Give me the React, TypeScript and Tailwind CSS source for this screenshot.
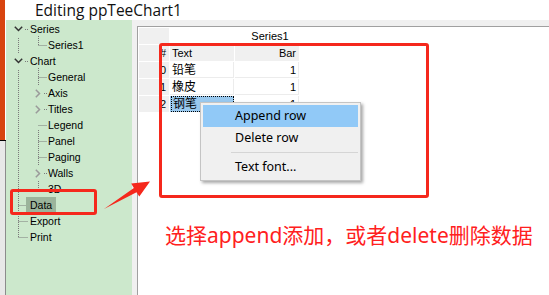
import React from 'react'

type Node = { label: string; level: 0 | 1; exp?: 'down' | 'right'; selected?: boolean }

const tree: Node[] = [
  { label: 'Series', level: 0, exp: 'down' },
  { label: 'Series1', level: 1 },
  { label: 'Chart', level: 0, exp: 'down' },
  { label: 'General', level: 1 },
  { label: 'Axis', level: 1, exp: 'right' },
  { label: 'Titles', level: 1, exp: 'right' },
  { label: 'Legend', level: 1 },
  { label: 'Panel', level: 1 },
  { label: 'Paging', level: 1 },
  { label: 'Walls', level: 1, exp: 'right' },
  { label: '3D', level: 1 },
  { label: 'Data', level: 0, selected: true },
  { label: 'Export', level: 0 },
  { label: 'Print', level: 0 },
]

const rows = [
  { n: '0', text: '铅笔', v: '1' },
  { n: '1', text: '橡皮', v: '1' },
  { n: '2', text: '钢笔', v: '1', selected: true },
]

// dotted connector lines of the tree view, panel coordinates
function TreeLines() {
  const y = (i: number) => 9.5 + 16 * i
  const dot = { stroke: '#7a7a7a', strokeWidth: 1, strokeDasharray: '1 1' }
  return (
    <svg className="absolute inset-0 pointer-events-none" width="126" height="275">
      <line x1="12.5" y1="14" x2="12.5" y2="33" {...dot} />
      <line x1="12.5" y1="46" x2="12.5" y2={y(13)} {...dot} />
      {[11, 12, 13].map((i) => (
        <line key={i} x1="12.5" y1={y(i)} x2="22" y2={y(i)} {...dot} />
      ))}
      <line x1="19" y1={y(0)} x2="22" y2={y(0)} {...dot} />
      <line x1="19" y1={y(2)} x2="22" y2={y(2)} {...dot} />
      {/* Series children */}
      <line x1="32.5" y1="16" x2="32.5" y2={y(1)} {...dot} />
      <line x1="32.5" y1={y(1)} x2="41" y2={y(1)} {...dot} />
      {/* Chart children */}
      <line x1="32.5" y1="48" x2="32.5" y2="69" {...dot} />
      <line x1="32.5" y1="110" x2="32.5" y2="148" {...dot} />
      <line x1="32.5" y1="159" x2="32.5" y2={y(10)} {...dot} />
      {[3, 6, 7, 8, 10].map((i) => (
        <line key={i} x1="32.5" y1={y(i)} x2="41" y2={y(i)} {...dot} />
      ))}
      {[4, 5, 9].map((i) => (
        <line key={i} x1="38" y1={y(i)} x2="41" y2={y(i)} {...dot} />
      ))}
    </svg>
  )
}

function Chevron({ dir }: { dir: 'down' | 'right' }) {
  if (dir === 'down')
    return (
      <svg width="9" height="6" viewBox="0 0 9 6" className="shrink-0">
        <path d="M0.8 0.8 L4.5 4.5 L8.2 0.8" fill="none" stroke="#333" strokeWidth="1.5" />
      </svg>
    )
  return (
    <svg width="6" height="9" viewBox="0 0 6 9" className="shrink-0">
      <path d="M0.8 0.8 L4.5 4.5 L0.8 8.2" fill="none" stroke="#9a9a9a" strokeWidth="1.5" />
    </svg>
  )
}

function TreeRow({ node }: { node: Node }) {
  const isTop = node.level === 0
  return (
    <div className="h-4 flex items-center relative">
      {node.exp && (
        <div
          className={`absolute top-0 h-4 flex items-center justify-center bg-[#cce8cc] ${
            isTop ? 'left-[7px] w-[11px]' : 'left-[28px] w-[8px]'
          }`}
        >
          <Chevron dir={node.exp} />
        </div>
      )}
      <span
        className={`leading-4 px-[4px] ${isTop ? 'ml-[20px]' : 'ml-[38px]'} ${
          node.selected ? 'bg-[#9bb49b]' : ''
        }`}
      >
        {node.label}
      </span>
    </div>
  )
}

function DataGrid() {
  const fixed = 'bg-[#f0f0f0] flex items-center justify-end pr-[3px]'
  const cell = 'bg-white shadow-[inset_-1px_-1px_0_#ececec] flex items-center'
  return (
    <div className="grid grid-cols-[30px_64px_64px] auto-rows-[16px] gap-px w-max text-[11px]">
      <div className="bg-[#f0f0f0]" />
      <div className="bg-white" />
      <div className="bg-white flex items-center justify-center pl-[6px]">Series1</div>

      <div className={fixed}>#</div>
      <div className="bg-[#f0f0f0] flex items-center pl-[2px]">Text</div>
      <div className="bg-[#f0f0f0] flex items-center justify-end pr-[3px]">Bar</div>

      {rows.map((r) => (
        <React.Fragment key={r.n}>
          <div className={fixed}>{r.n}</div>
          {r.selected ? (
            <div className="bg-[#99c9ef] flex items-center pl-[1px]">
              <span className="border border-dotted border-black h-full w-full flex items-center pl-[1px] text-[12px]">
                {r.text}
              </span>
            </div>
          ) : (
            <div className={`${cell} pl-[2px] text-[12px]`}>{r.text}</div>
          )}
          <div className={`${cell} justify-end pr-[3px]`}>{r.v}</div>
        </React.Fragment>
      ))}
    </div>
  )
}

function ContextMenu() {
  const item = 'h-[22px] leading-[22px] pl-[32px]'
  return (
    <div className="absolute left-[200px] top-[102px] w-[161px] bg-[#f0f0f0] border border-[#c4c4c4] p-[2px] shadow-[2px_2px_3px_rgba(0,0,0,0.35)] text-[12.5px] font-['Noto_Sans','Liberation_Sans',sans-serif]">
      <div className={`${item} bg-[#91c9f7]`}>Append row</div>
      <div className={item}>Delete row</div>
      <div className="my-[3px] ml-[28px] h-px bg-[#d5d5d5]" />
      <div className={item}>Text font...</div>
    </div>
  )
}

export default function App() {
  return (
    <div className="relative w-[549px] h-[295px] overflow-hidden bg-white flex text-black font-['Liberation_Sans','Noto_Sans_CJK_SC',sans-serif]">
      {/* edge of the window behind */}
      <div className="w-[6px] flex flex-col">
        <div className="h-[140px] w-[5px] bg-[#d8440f]" />
        <div className="h-px bg-black" />
        <div className="flex-1 bg-[#e8e8e8] border-r border-[#8c8c8c]" />
      </div>

      <div className="flex-1 flex flex-col">
        <div className="h-[20px] pl-[29px] text-[15.5px] leading-[20px] font-['Open_Sans',sans-serif] text-[#111]">
          Editing ppTeeChart1
        </div>

        <div className="flex-1 flex">
          {/* tree view */}
          <div className="w-[126px] bg-[#cce8cc] relative pt-px text-[10.5px]">
            <TreeLines />
            {tree.map((n) => (
              <TreeRow key={n.label} node={n} />
            ))}
          </div>

          {/* data page */}
          <div className="flex-1 bg-[#f0f0f0] pl-[5px] pt-[6px] flex">
            <div className="flex-1 bg-white border-l border-t border-[#a0a0a0] p-px">
              <DataGrid />
              <div className="mt-[109px] pl-[26px] text-[21px] leading-[28px] text-[#ff2020] font-['Noto_Sans','Noto_Sans_CJK_SC',sans-serif] whitespace-nowrap">
                选择append添加，或者delete删除数据
              </div>
            </div>
          </div>
        </div>
      </div>

      {/* annotations */}
      <div className="absolute left-[159px] top-[43px] w-[270px] h-[155px] border-[3px] border-[#f5281c] rounded-[3px]" />
      <div className="absolute left-[10px] top-[189px] w-[87px] h-[26px] border-[3px] border-[#f5281c] rounded-[3px]" />
      <svg className="absolute left-0 top-0 pointer-events-none" width="549" height="295">
        <polygon
          points="104,209 133.9,188 131.2,183.6 150,181.5 139.3,196.6 136.5,192.3"
          fill="#f5281c"
        />
      </svg>

      <ContextMenu />
    </div>
  )
}
